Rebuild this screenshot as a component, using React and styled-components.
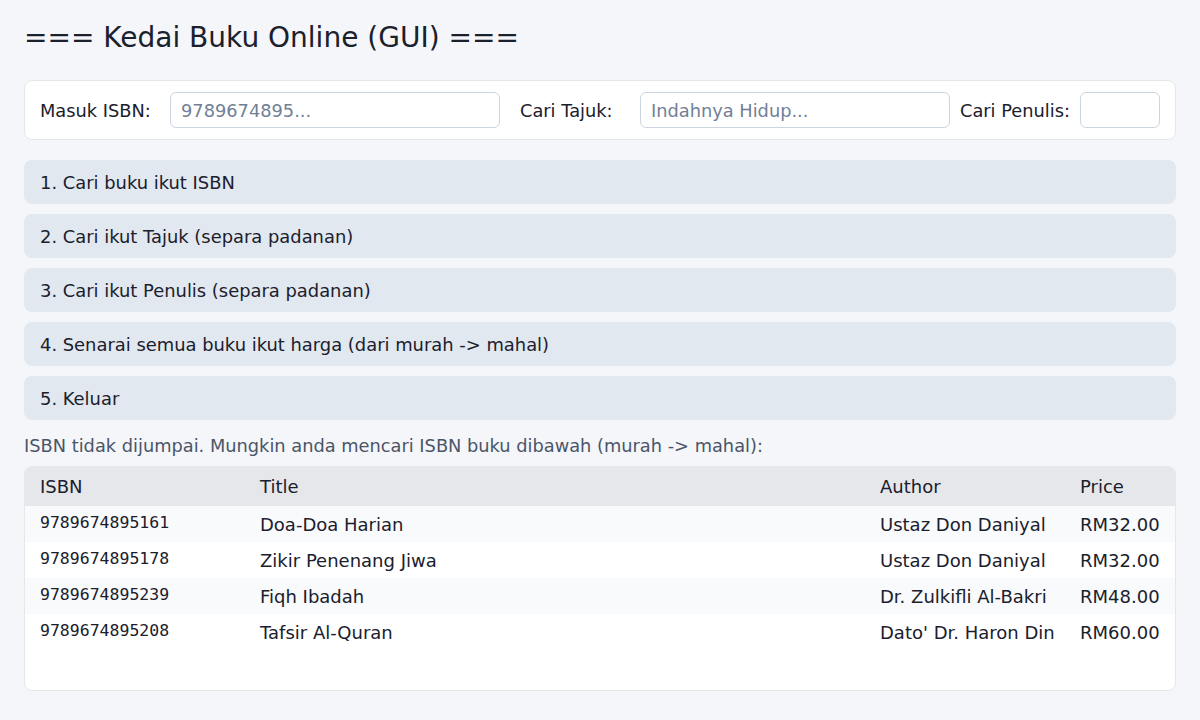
import styled, { createGlobalStyle } from "styled-components";

const GlobalStyle = createGlobalStyle`
  html, body {
    margin: 0;
    padding: 0;
    background: #f5f6fa;
  }
  body {
    font-family: "DejaVu Sans", "Noto Sans", sans-serif;
    color: #1a202c;
  }
`;

const books = [
  { isbn: "9789674895161", title: "Doa-Doa Harian", author: "Ustaz Don Daniyal", price: 32 },
  { isbn: "9789674895178", title: "Zikir Penenang Jiwa", author: "Ustaz Don Daniyal", price: 32 },
  { isbn: "9789674895239", title: "Fiqh Ibadah", author: "Dr. Zulkifli Al-Bakri", price: 48 },
  { isbn: "9789674895208", title: "Tafsir Al-Quran", author: "Dato' Dr. Haron Din", price: 60 },
];

const menu = [
  "1. Cari buku ikut ISBN",
  "2. Cari ikut Tajuk (separa padanan)",
  "3. Cari ikut Penulis (separa padanan)",
  "4. Senarai semua buku ikut harga (dari murah -> mahal)",
  "5. Keluar",
];

const Page = styled.div`
  padding: 21px 24px 20px;
  display: flex;
  flex-direction: column;
`;

const Title = styled.h1`
  margin: 0 0 26px;
  font-size: 28px;
  font-weight: 400;
  line-height: normal;
  color: #1a202c;
`;

const SearchCard = styled.div`
  display: flex;
  align-items: center;
  gap: 10px;
  background: #fff;
  border: 1px solid #e5e7eb;
  border-radius: 8px;
  padding: 11px 15px;
`;

const Label = styled.label`
  width: ${(p) => p.$w}px;
  margin-left: ${(p) => p.$ml || 0}px;
  font-size: 17.8px;
  color: #1a202c;
  white-space: nowrap;
`;

const Input = styled.input`
  box-sizing: border-box;
  width: ${(p) => p.$w}px;
  height: 36px;
  padding: 0 10px;
  border: 1px solid #cbd5e1;
  border-radius: 6px;
  font-family: inherit;
  font-size: 17.8px;
  color: #1a202c;
  background: #fff;
  outline: none;

  &::placeholder {
    color: #718096;
  }
`;

const Menu = styled.div`
  display: flex;
  flex-direction: column;
  gap: 10px;
  margin-top: 20px;
`;

const MenuButton = styled.button`
  box-sizing: border-box;
  height: 44px;
  width: 100%;
  text-align: left;
  padding: 1px 16px 0;
  border: none;
  border-radius: 8px;
  background: #e2e8f0;
  font-family: inherit;
  font-size: 17.9px;
  color: #1a202c;
  cursor: pointer;
`;

const Message = styled.p`
  margin: 16px 0 10px;
  font-size: 17.8px;
  line-height: 20px;
  color: #4a5568;
`;

const TableCard = styled.div`
  background: #fff;
  border: 1px solid #e5e7eb;
  border-radius: 8px;
  overflow: hidden;
  padding-bottom: 40px;
`;

const Table = styled.table`
  width: calc(100% + 2px);
  margin: -1px -1px 0;
  border-collapse: collapse;
  table-layout: fixed;
`;

const HeadRow = styled.tr`
  height: 40px;
  background: #e5e7eb;
`;

const Th = styled.th`
  width: ${(p) => p.$w};
  padding: 0 16px;
  text-align: left;
  font-weight: 400;
  font-size: 18px;
  color: #1a202c;
`;

const Row = styled.tr`
  height: 36px;
  background: ${(p) => (p.$striped ? "#f9fafc" : "#ffffff")};
`;

const Td = styled.td`
  padding: 1px 16px 0;
  font-size: 18px;
  color: #1a202c;
  white-space: nowrap;
`;

const IsbnTd = styled(Td)`
  font-family: "DejaVu Sans Mono", "Liberation Mono", monospace;
  font-size: 16.5px;
  vertical-align: top;
  padding-top: 7px;
`;

export default function App() {
  return (
    <>
      <GlobalStyle />
      <Page>
        <Title>=== Kedai Buku Online (GUI) ===</Title>

        <SearchCard>
          <Label $w={120}>Masuk ISBN:</Label>
          <Input $w={330} placeholder="9789674895..." />
          <Label $w={110} $ml={10}>Cari Tajuk:</Label>
          <Input $w={310} placeholder="Indahnya Hidup..." />
          <Label $w={110}>Cari Penulis:</Label>
          <Input $w={80} />
        </SearchCard>

        <Menu>
          {menu.map((m) => (
            <MenuButton key={m}>{m}</MenuButton>
          ))}
        </Menu>

        <Message>
          ISBN tidak dijumpai. Mungkin anda mencari ISBN buku dibawah (murah -&gt; mahal):
        </Message>

        <TableCard>
          <Table>
            <thead>
              <HeadRow>
                <Th $w="188px">ISBN</Th>
                <Th $w="588px">Title</Th>
                <Th $w="168px">Author</Th>
                <Th>Price</Th>
              </HeadRow>
            </thead>
            <tbody>
              {books.map((b, i) => (
                <Row key={b.isbn} $striped={i % 2 === 0}>
                  <IsbnTd>{b.isbn}</IsbnTd>
                  <Td>{b.title}</Td>
                  <Td>{b.author}</Td>
                  <Td>RM{b.price.toFixed(2)}</Td>
                </Row>
              ))}
            </tbody>
          </Table>
        </TableCard>
      </Page>
    </>
  );
}
